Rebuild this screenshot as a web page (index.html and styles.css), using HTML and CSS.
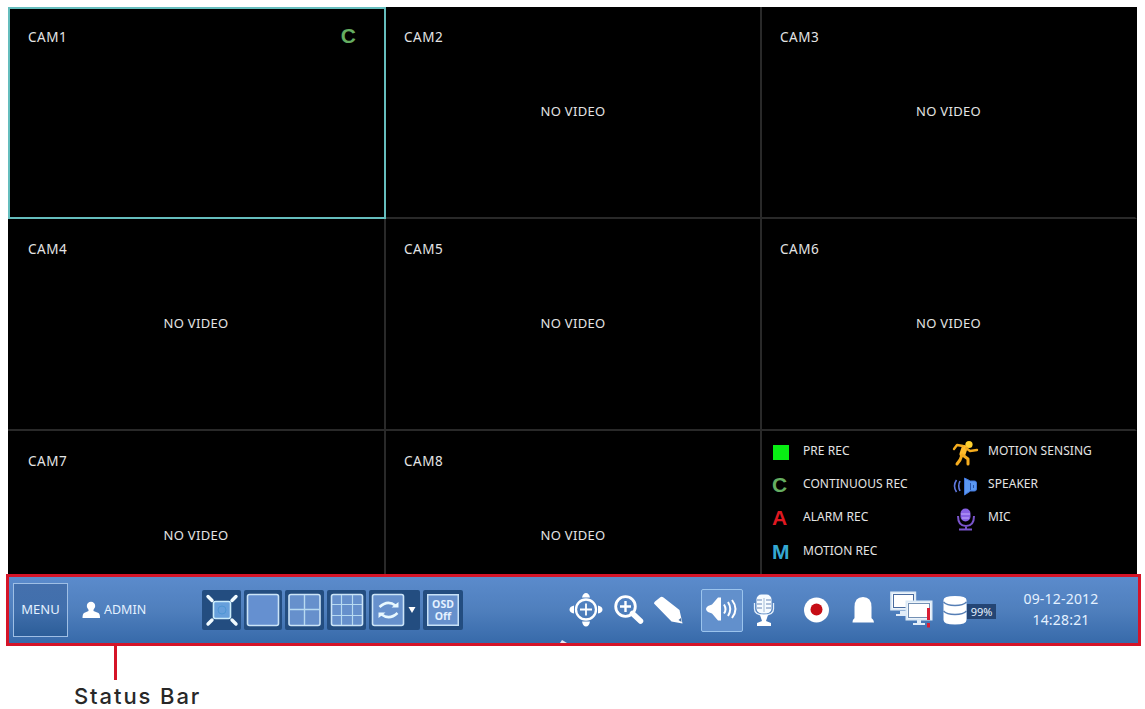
FILE: index.html
```html
<!DOCTYPE html>
<html lang="en">
<head>
<meta charset="utf-8">
<title>Live View</title>
<link rel="stylesheet" href="styles.css">
</head>
<body>
<main class="page">
<section class="cameras">
<div class="cell active"><span class="name">CAM1</span><b class="rec green">C</b></div>
<div class="cell"><span class="name">CAM2</span><span class="novideo">NO VIDEO</span></div>
<div class="cell"><span class="name">CAM3</span><span class="novideo">NO VIDEO</span></div>
<div class="cell"><span class="name">CAM4</span><span class="novideo">NO VIDEO</span></div>
<div class="cell"><span class="name">CAM5</span><span class="novideo">NO VIDEO</span></div>
<div class="cell"><span class="name">CAM6</span><span class="novideo">NO VIDEO</span></div>
<div class="cell"><span class="name">CAM7</span><span class="novideo">NO VIDEO</span></div>
<div class="cell"><span class="name">CAM8</span><span class="novideo">NO VIDEO</span></div>
<div class="cell legend">
<div class="legend-col">
<div class="item"><i class="swatch"></i><span>PRE REC</span></div>
<div class="item"><b class="green">C</b><span>CONTINUOUS REC</span></div>
<div class="item"><b class="red">A</b><span>ALARM REC</span></div>
<div class="item"><b class="cyan">M</b><span>MOTION REC</span></div>
</div>
<div class="legend-col wide">
<div class="item"><svg width="27" height="28" viewBox="953 438 27 28" fill="none" stroke="#f5ac1e" stroke-linecap="round" stroke-linejoin="round"><circle cx="970" cy="443.500" r="3.600" fill="#ffd12e" stroke="none"/><path d="M965.500 447l-2 6" stroke-width="6" stroke="#ffbb2b"/><path d="M964 445l-6-1-3 4M967 447l4 3 7-1" stroke-width="2.400"/><path d="M963 454l-2 5-3 4M965 455l4 3v5" stroke-width="3"/></svg><span>MOTION SENSING</span></div>
<div class="item"><svg width="27" height="24" viewBox="953 474 27 24" fill="none" stroke="#5f78df" stroke-width="1.600"><path d="M961 481q-2.500 5 0 10M957.500 480q-4 6 0 12"/><path d="M965.500 478l6 3h4q2 0 2 2v6q0 2-2 2h-4l-6 4z" fill="#5b98f2" stroke="#4075d8" stroke-width="1"/><path d="M971.500 483v7M974.500 485v3" stroke="#2854aa" stroke-width="1"/></svg><span>SPEAKER</span></div>
<div class="item"><svg width="27" height="26" viewBox="953 506 27 26" fill="none" stroke="#7954cb" stroke-width="2"><rect x="961.500" y="508.500" width="10" height="13" rx="5" fill="#8761e4" stroke="none"/><path d="M959 516q0 10 8 10t8-10M967 525v4M960 529.500h13"/><path d="M962 514h9M963 518h7" stroke="#c4adff" stroke-width="1"/></svg><span>MIC</span></div>
</div>
</div>
</section>
<section class="statusbar">
<button class="menu">MENU</button>
<div class="user"><svg width="18" height="18" viewBox="81 601 18 18" fill="#fff"><circle cx="90" cy="606" r="4.200"/><path d="M87.500 608h5v3l5 2q1.500 1 1.500 5H81.500q0-4 1.500-5l4.500-2z"/></svg><span>ADMIN</span></div>
<div class="tiles">
<svg class="tile" width="39" height="40" viewBox="202 590 39 40"><rect x="213.500" y="601.500" width="17" height="17" rx="2" fill="#669fdb" stroke="#cbecfb" stroke-width="1.600"/><circle cx="222" cy="610" r="4" fill="none" stroke="#4d96d5"/><path d="M208 596.500l4 4M236 596.500l-4 4M208 624l4-4M236 624l-4-4" stroke="#f1fbff" stroke-width="3.400" stroke-linecap="round"/></svg>
<svg class="tile" width="38" height="40" viewBox="244 590 38 40"><rect x="247.500" y="594.500" width="31" height="31" rx="2" fill="#6590d0" stroke="#cbe4f7" stroke-width="1.600"/></svg>
<svg class="tile" width="39" height="40" viewBox="285 590 39 40"><rect x="289" y="594.500" width="31" height="31" rx="2" fill="#6690cc" stroke="#cbe4f7" stroke-width="1.600"/><path d="M304.500 595v30M289 609.500h31" stroke="#b8daf1" stroke-width="1.400"/></svg>
<svg class="tile" width="39" height="40" viewBox="327 590 39 40"><rect x="331.500" y="594.500" width="31" height="31" rx="2" fill="#6690cc" stroke="#cbe4f7" stroke-width="1.600"/><path d="M341.500 595v30M352.500 595v30M332 604.500h30M332 615.500h30" stroke="#b8daf1" stroke-width="1.200"/></svg>
<svg class="tile" width="51" height="40" viewBox="369 590 51 40"><rect x="372.500" y="594.500" width="31" height="31" rx="2" fill="#6690cc" stroke="#cbe4f7" stroke-width="1.600"/><path d="M379.500 607q8-7.500 16-1.500M397.500 613q-8 7.500-16 1.500" fill="none" stroke="#e8f8ff" stroke-width="2.500"/><path d="M398.500 602v5.500h-7zM378.500 618v-5.500h7z" fill="#e8f8ff"/><path d="M408.500 607h7l-3.500 6z" fill="#fff"/></svg>
<div class="tile osd"><span>OSD</span><span>Off</span></div>
</div>
<svg class="move" width="36" height="38" viewBox="568 592 36 38" fill="none" stroke="#fff" stroke-width="2.300"><circle cx="586" cy="610.500" r="10"/><path d="M586 604.500v12M580 610.500h12" stroke-width="1.800"/><path d="M582 598.500q1-4.500 4-4.500t4 4.500zM582 622.500q1 5 4 5t4-5zM574 606.500q-4.500 1-4.500 4t4.500 4zM598 606.500q4.500 1 4.500 4t-4.500 4z" fill="#fff" stroke="none"/></svg>
<svg class="magnifier" width="32" height="34" viewBox="613 593 32 34" fill="none" stroke="#fff"><path d="M632.500 613.500l8 7.500" stroke-width="5.500" stroke-linecap="round"/><circle cx="625.500" cy="606.500" r="9.800" stroke-width="2.800"/><path d="M625.500 601v11M620 606.500h11" stroke-width="2.400"/></svg>
<svg class="pencil" width="32" height="32" viewBox="653 593 32 32"><path d="M654 602.500q0-1 1-2l5-4q1.500-1.500 3.500 0L679.500 609l3 13.500-11-2z" fill="#fff"/><path d="M678.500 619l2.500-2 .5 4z" fill="#476f9f"/></svg>
<div class="sound"><svg width="34" height="28" viewBox="706 597 34 28" fill="none" stroke="#fff" stroke-width="2"><path d="M709 607l4-1.500 6-7h3v23h-3l-6-7-4-1.500q-4-3 0-6z" fill="#fff" stroke="none"/><path d="M725 605.500q3 5 0 9M729 603q4.500 7 0 14M733 601q7 9 0 18"/></svg></div>
<svg class="mic" width="22" height="34" viewBox="753 593 22 34" fill="none"><rect x="756.500" y="594.500" width="15" height="19" rx="5" fill="#f6fbff"/><path d="M757 600h5M766 600h5M757 604h5M766 604h5M757 608h5M766 608h5" stroke="#6686b7" stroke-width="1"/><path d="M754.500 603v6q0 6 9.500 6t9.500-6v-6" stroke="#e4effb" stroke-width="1.300"/><path d="M764 598v14" stroke="#bfd0e3" stroke-width="1.500"/><path d="M760 615h8l-2 6 5 2v3h-14v-3l5-2z" fill="#fff"/></svg>
<svg class="record" width="26" height="26" viewBox="804 597.500 26 26"><circle cx="816.500" cy="610.500" r="12.500" fill="#fff"/><circle cx="816.500" cy="610" r="6" fill="#c60d16"/></svg>
<svg class="bell" width="23" height="28" viewBox="852 597 23 28" fill="#fff"><path d="M854.500 620v-12q0-10 8.500-10t8.500 10v12z"/><path d="M852.500 623.500q0-4 3-4.500h15q3 .5 3.500 4.500z"/></svg>
<svg class="monitors" width="44" height="40" viewBox="890 591 44 40"><path d="M900 612h8v3h4v2h-16v-2h4z" fill="#e2edf8"/><rect x="891.200" y="593.500" width="24" height="17" fill="#fff" stroke="#dbe9f6" stroke-width="2"/><rect x="893.500" y="595.500" width="20" height="13" fill="none" stroke="#486b9f"/><path d="M917 620h4v4h4v2h-12v-2h4z" fill="#e2edf8"/><rect x="906.500" y="602.500" width="25" height="18" fill="#fff" stroke="#dbe9f6" stroke-width="2"/><rect x="908.500" y="604.500" width="21" height="14" fill="none" stroke="#7390b4"/><path d="M928.500 609v12M928.500 624v4.500" stroke="#d91d34" stroke-width="3"/></svg>
<svg class="disk" width="24" height="30" viewBox="943 596 24 30"><path d="M943.500 601q0-4 11.500-4t11.500 4v20q0 4.500-11.500 4.500T943.500 621z" fill="#fff"/><path d="M943.500 603q3 3.500 11.500 3.500t11.500-3.500M943.500 612q3 3.500 11.500 3.500t11.500-3.500" fill="none" stroke="#557eb5" stroke-width="1.500"/></svg>
<span class="percent">99%</span>
<div class="clock"><span>09-12-2012</span><span>14:28:21</span></div>
<svg class="pointer" width="8" height="5" viewBox="0 0 8 5"><path d="M0 4l2-3 5 3z" fill="#e4e8f4"/></svg>
</section>
<section class="callout"><i class="leader"></i><div class="caption">Status Bar</div></section>
</main>
</body>
</html>
```
FILE: styles.css
```css
* { box-sizing: border-box; }
body { margin: 0; background: #fff; font-family: "Noto Sans", "Open Sans", sans-serif; }
.page { width: 1145px; height: 709px; padding: 7px 4px 0 6px; overflow: hidden; }
.cameras { display: grid; grid-template-columns: 378px 376px 375px; grid-template-rows: 212px 212px 143px; width: 1129px; margin-left: 2px; background: #000; }
.cell { position: relative; border-right: 2px solid #292929; border-bottom: 2px solid #292929; padding: 19px 18px; color: #e4e4e4; }
.cell:nth-child(3n+1) { padding-left: 20px; }
.cell:nth-child(3n) { border-right-color: #000; }
.cell:nth-child(n+7) { border-bottom: 0; }
.cell.active { border: 2px solid #65bdbd; padding: 17px 18px; }
.name { display: block; font-size: 13.5px; line-height: 22px; letter-spacing: .5px; }
.rec { position: absolute; right: 28px; top: 14px; font: bold 21px/26px "Liberation Sans", sans-serif; }
.novideo { position: absolute; left: 0; right: 0; top: 94px; text-align: center; font-size: 13px; line-height: 20px; letter-spacing: .3px; }
.green { color: #65ad61; }
.red { color: #df1820; }
.cyan { color: #35a8d2; }
.cell.legend { display: flex; padding: 5px 0 0 9px; }
.legend-col { width: 181px; display: grid; grid-template-rows: repeat(4, 33.3px); height: 134px; }
.item { display: grid; grid-template-columns: 32px 1fr; align-items: center; font-size: 12px; line-height: 18px; letter-spacing: .05px; white-space: nowrap; }
.item span { padding-bottom: 4px; }
.item b { font: bold 21px/22px "Liberation Sans", sans-serif; padding: 0 0 2px 1px; }
.swatch { width: 16px; height: 15px; background: #08ee13; margin-left: 2px; }
.wide .item { grid-template-columns: 36px 1fr; }
.statusbar { position: relative; display: flex; align-items: center; width: 1135px; height: 72px; border: 3px solid #d51428; background: linear-gradient(#5b8bcc, #4f7fbd 50%, #376aaa); color: #e4f1ff; }
.statusbar > * { flex-shrink: 0; }
.menu { width: 55px; height: 54px; margin-left: 4px; padding: 0 0 3px; border: 1px solid #9fbfe5; background: linear-gradient(#4470ad, #416fac 50%, #2c5e99); color: #e4f1ff; font: 13px "Noto Sans", sans-serif; }
.user { display: flex; align-items: center; gap: 4px; margin-left: 14px; padding-bottom: 1px; font-size: 12.5px; }
.user span { width: 45px; }
.tiles { display: flex; gap: 3px; margin-left: 53px; }
.tile { background: #234d80; border-radius: 2px; display: block; }
.osd { display: grid; grid-template-rows: 12px 12px; align-content: center; width: 40px; height: 40px; border: 4px solid #234d80; background: #6690cc; box-shadow: inset 0 0 0 1.5px #c7e1f7; font: bold 10.5px/12px "Noto Sans", sans-serif; text-align: center; }
.move { margin-left: 105px; }
.magnifier { margin-left: 9px; }
.pencil { margin-left: 8px; }
.sound { display: grid; place-items: center; width: 42px; height: 43px; margin-left: 16px; border: 1px solid #9bc4ed; border-radius: 2px; background: #6290cc; }
.mic { margin-left: 10px; }
.record { margin-left: 29px; }
.bell { margin-left: 22px; }
.monitors { margin-left: 15px; }
.disk { margin-left: 9px; }
.percent { width: 29px; height: 15px; margin-top: 2px; background: #244574; font-size: 11px; line-height: 15px; text-align: center; }
.clock { width: 80px; margin-left: 25px; padding-bottom: 2px; text-align: center; font-size: 14px; line-height: 21px; letter-spacing: .2px; white-space: nowrap; }
.clock span { display: block; }
.pointer { position: absolute; left: 551px; bottom: -1px; }
.callout { height: 63px; }
.leader { display: block; width: 3px; height: 34px; margin-left: 108px; background: #d51428; }
.caption { padding-left: 68px; color: #282828; font: 500 22px/26px Inter, Roboto, sans-serif; letter-spacing: 1.9px; margin-top: 3px; }
```
